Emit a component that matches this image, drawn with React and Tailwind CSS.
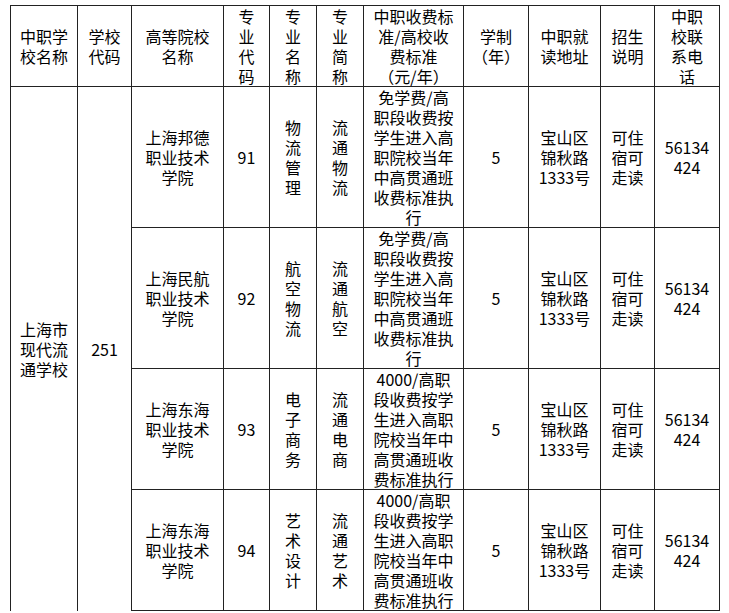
const font = { fontFamily: '"Noto Sans CJK SC", "Noto Sans", sans-serif' };

const feeA = ["免学费/高", "职段收费按", "学生进入高", "职院校当年", "中高贯通班", "收费标准执", "行"];
const feeB = ["4000/高职", "段收费按学", "生进入高职", "院校当年中", "高贯通班收", "费标准执行"];

const rows = [
  { college: ["上海邦德", "职业技术", "学院"], code: "91", major: ["物", "流", "管", "理"], short: ["流", "通", "物", "流"], fee: feeA, h: "h-[140px]" },
  { college: ["上海民航", "职业技术", "学院"], code: "92", major: ["航", "空", "物", "流"], short: ["流", "通", "航", "空"], fee: feeA, h: "h-[140px]" },
  { college: ["上海东海", "职业技术", "学院"], code: "93", major: ["电", "子", "商", "务"], short: ["流", "通", "电", "商"], fee: feeB, h: "h-[121px]" },
  { college: ["上海东海", "职业技术", "学院"], code: "94", major: ["艺", "术", "设", "计"], short: ["流", "通", "艺", "术"], fee: feeB, h: "h-[121px]" },
];

function Lines({ items }) {
  return (
    <div className="flex flex-col items-center">
      {items.map((t, i) => (
        <div key={i} className="whitespace-nowrap">
          {t}
        </div>
      ))}
    </div>
  );
}

const cell = "border border-[#222] p-0 text-center align-middle";

export default function App() {
  return (
    <div className="w-[729px] h-[613px] overflow-hidden bg-white pt-[5px] pl-[10px] text-black text-[16px] leading-[20px]" style={font}>
      <table className="table-fixed border-collapse w-[709px]">
        <colgroup>
          <col className="w-[67px]" />
          <col className="w-[54px]" />
          <col className="w-[92px]" />
          <col className="w-[46px]" />
          <col className="w-[47px]" />
          <col className="w-[47px]" />
          <col className="w-[100px]" />
          <col className="w-[65px]" />
          <col className="w-[72px]" />
          <col className="w-[54px]" />
          <col className="w-[65px]" />
        </colgroup>
        <thead>
          <tr className="h-[81px]">
            <th className={`${cell} font-normal`}><Lines items={["中职学", "校名称"]} /></th>
            <th className={`${cell} font-normal`}><Lines items={["学校", "代码"]} /></th>
            <th className={`${cell} font-normal`}><Lines items={["高等院校", "名称"]} /></th>
            <th className={`${cell} font-normal`}><Lines items={["专", "业", "代", "码"]} /></th>
            <th className={`${cell} font-normal`}><Lines items={["专", "业", "名", "称"]} /></th>
            <th className={`${cell} font-normal`}><Lines items={["专", "业", "简", "称"]} /></th>
            <th className={`${cell} font-normal`}><Lines items={["中职收费标", "准/高校收", "费标准", "（元/年）"]} /></th>
            <th className={`${cell} font-normal`}><Lines items={["学制", "（年）"]} /></th>
            <th className={`${cell} font-normal`}><Lines items={["中职就", "读地址"]} /></th>
            <th className={`${cell} font-normal`}><Lines items={["招生", "说明"]} /></th>
            <th className={`${cell} font-normal`}><Lines items={["中职", "校联", "系电", "话"]} /></th>
          </tr>
        </thead>
        <tbody>
          {rows.map((r, i) => (
            <tr key={i} className={r.h}>
              {i === 0 && (
                <>
                  <td rowSpan={4} className={`${cell} border-b-0`}><Lines items={["上海市", "现代流", "通学校"]} /></td>
                  <td rowSpan={4} className={`${cell} border-b-0`}>251</td>
                </>
              )}
              <td className={cell}><Lines items={r.college} /></td>
              <td className={cell}>{r.code}</td>
              <td className={cell}><Lines items={r.major} /></td>
              <td className={cell}><Lines items={r.short} /></td>
              <td className={cell}><Lines items={r.fee} /></td>
              <td className={cell}>5</td>
              <td className={cell}><Lines items={["宝山区", "锦秋路", "1333号"]} /></td>
              <td className={cell}><Lines items={["可住", "宿可", "走读"]} /></td>
              <td className={cell}><Lines items={["56134", "424"]} /></td>
            </tr>
          ))}
        </tbody>
      </table>
    </div>
  );
}
